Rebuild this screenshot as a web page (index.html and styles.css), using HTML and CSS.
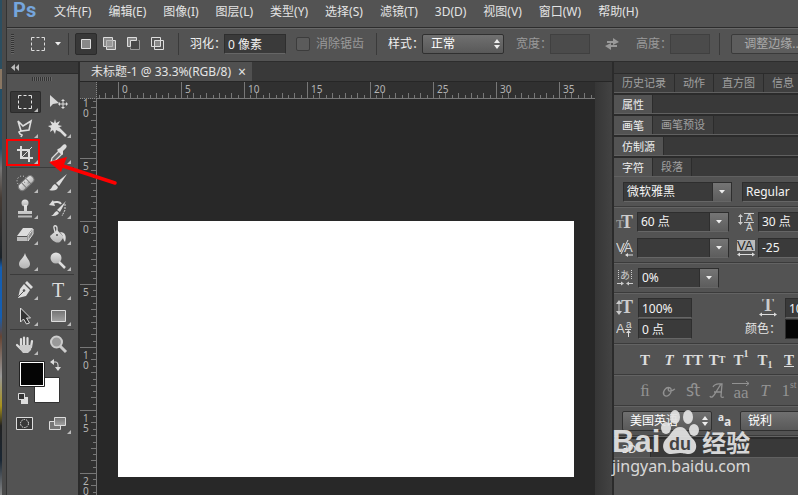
FILE: index.html
```html
<!DOCTYPE html>
<html lang="zh-CN">
<head>
<meta charset="utf-8">
<title>未标题-1 @ 33.3%(RGB/8)</title>
<link rel="stylesheet" href="styles.css">
</head>
<body>
<svg class="defs" aria-hidden="true">
  <defs>
    <linearGradient id="metal" x1="0" y1="0" x2="0" y2="1"><stop offset="0" stop-color="#e6e6e6"/><stop offset="1" stop-color="#b4b4b4"/></linearGradient>
    <linearGradient id="steel" x1="0" y1="0" x2="0" y2="1"><stop offset="0" stop-color="#737373"/><stop offset="1" stop-color="#a2a2a2"/></linearGradient>
    <symbol id="ticks-h" viewBox="0 0 63 16"><path d="M.5 0v16M12.5 11v5M25.5 11v5M38.5 11v5M50.5 11v5M6.5 13v3M19.5 13v3M32.5 13v3M44.5 13v3M57.5 13v3" stroke="#777" fill="none"/></symbol>
    <symbol id="ticks-v" viewBox="0 0 16 63"><path d="M0 .5h16M11 12.500h5M11 25.500h5M11 38.500h5M11 50.500h5M13 6.500h3M13 19.500h3M13 32.500h3M13 44.500h3M13 57.500h3" stroke="#777" fill="none"/></symbol>
    <symbol id="down" viewBox="0 0 6 4"><path d="M0 0h6L3 3.500z" fill="#eee"/></symbol>
    <symbol id="updown" viewBox="0 0 6 10"><path d="M0 4h6L3 0zM0 6h6L3 10z" fill="#eee"/></symbol>
    <symbol id="marquee" viewBox="0 0 16 16"><path d="M1.500 4.500v-3h3M6.500 1.500h3M11.500 1.500h3v3M14.500 6.500v3M14.500 11.500v3h-3M9.500 14.500h-3M4.500 14.500h-3v-3M1.500 9.500v-3" fill="none" stroke="#ddd"/></symbol>
  </defs>
</svg>
<div class="screen">
  <div class="desktop-edge"></div>
  <div class="app">
    <nav class="menubar" aria-label="菜单">
      <span class="logo">Ps</span>
      <button>文件(F)</button><button>编辑(E)</button><button>图像(I)</button><button>图层(L)</button><button>类型(Y)</button><button>选择(S)</button><button>滤镜(T)</button><button>3D(D)</button><button>视图(V)</button><button>窗口(W)</button><button>帮助(H)</button>
    </nav>

    <div class="options">
      <span class="grip-v"></span>
      <button class="preset" aria-label="选框工具"><svg width="16" height="16"><use href="#marquee"/></svg><svg width="6" height="4"><use href="#down"/></svg></button>
      <div class="modes">
        <button class="mode on" aria-label="新选区"><svg width="16" height="16"><path d="M3.500 3.500h9v9h-9z" fill="#888" stroke="#ddd"/></svg></button>
        <button class="mode" aria-label="添加到选区"><svg width="16" height="16"><path d="M1.500 1.500h9v3h3v9h-9v-3h-3z" fill="#888" stroke="#ddd"/><path d="M4.500 10.500v-6h6v6z" fill="#999" stroke="#bbb"/></svg></button>
        <button class="mode" aria-label="从选区减去"><svg width="16" height="16"><path d="M1.500 1.500h9v3h-6v6h-3z" fill="#888" stroke="#ddd"/><path d="M12.500 4.500h1v9h-9v-2" fill="none" stroke="#999"/><path d="M5 5h8v8H5z" fill="#484848"/></svg></button>
        <button class="mode" aria-label="与选区交叉"><svg width="16" height="16"><path d="M1.500 1.500h9v9h-9zM4.500 4.500h9v9h-9z" fill="none" stroke="#ddd"/><path d="M5 5h5v5H5z" fill="#888"/></svg></button>
      </div>
      <label class="opt">羽化：<input class="field feather" value="0 像素"></label>
      <label class="opt check dim"><input type="checkbox" disabled>消除锯齿</label>
      <div class="sized">
        <label class="opt">样式：<span class="pick style-pick"><select><option>正常</option></select><svg width="6" height="10"><use href="#updown"/></svg></span></label>
        <label class="opt dim">宽度：<input class="field size" disabled></label>
        <button class="swap" aria-label="交换宽高"><svg width="16" height="14"><path d="M3 4h6V1l6 4-6 3V6H3zM13 10H7v3L1 9l6-3v2h6z" fill="#999"/></svg></button>
        <label class="opt dim">高度：<input class="field size" disabled></label>
      </div>
      <button class="refine">调整边缘...</button>
    </div>

    <div class="workspace">
      <aside class="tools" aria-label="工具">
        <button class="collapse" aria-label="折叠"><svg width="9" height="7"><path d="M4 0v7L0 3.500zM8 0v7L4.500 3.500z" fill="#bbb"/></svg></button>
        <span class="grip-h"></span>
        <div class="toolset">
          <button class="tool on more" aria-label="矩形选框"><svg width="22" height="22" viewBox="0 0 22 22"><path d="M4.500 7.500v-3h3M9.500 4.500h3M14.500 4.500h3v3M17.500 9.500v3M17.500 14.500v3h-3M12.500 17.500h-3M7.500 17.500h-3v-3M4.500 12.500v-3" fill="none" stroke="#e5e5e5"/></svg></button>
          <button class="tool" aria-label="移动"><svg width="22" height="22" viewBox="0 0 22 22"><path d="M3 4v12l3-3 6-1z" fill="#d8d8d8"/><path d="M16 8l-2 2h4zM16 18l-2-2h4zM11 13l2-2v4zM21 13l-2-2v4z" fill="#ddd"/><path d="M16 9v8M12 13h8" stroke="#ddd"/></svg></button>
          <button class="tool more" aria-label="多边形套索"><svg width="22" height="22" viewBox="0 0 22 22"><path d="M4 4l5 5 8-5-2 9-8 1zM7 14l-2 1 1 2 2 1-1 2" fill="none" stroke="#ddd" stroke-width="1.600"/></svg></button>
          <button class="tool more" aria-label="魔棒"><svg width="22" height="22" viewBox="0 0 22 22"><path d="M8 2l1 4 4-2-2 4 4 1-4 2 2 4-4-2-1 4-2-4-3 2 1-4-3-2 4-1-2-4 4 2z" fill="#ddd"/><path d="M11 11l8 8" stroke="#ddd" stroke-width="2.500"/></svg></button>
          <button class="tool more" aria-label="裁剪"><svg width="22" height="22" viewBox="0 0 22 22"><path d="M7 3v12h12M3 7h12v12" fill="none" stroke="#ddd" stroke-width="2"/><path d="M8 14L18 4" stroke="#ddd"/></svg></button>
          <button class="tool more" aria-label="吸管"><svg width="22" height="22" viewBox="0 0 22 22"><path d="M4 19l1-4 7-7 3 3-7 7z" fill="#696969" stroke="#ddd" stroke-width="1.300"/><path d="M11 6l2-1 3-3c2-2 5 1 3 3l-3 3v3l-1 1-5-5z" fill="#ddd"/></svg></button>
        </div>
        <div class="toolset">
          <button class="tool more" aria-label="污点修复"><svg width="22" height="22" viewBox="0 0 22 22"><circle cx="8" cy="9" r="5" fill="none" stroke="#ddd" stroke-dasharray="1 2"/><g transform="rotate(-43 12 11)"><rect x="3" y="7.500" width="18" height="7.500" rx="3.500" fill="url(#metal)" stroke="#777"/><path d="M9 8v7M15 8v7M11 9.500h1M13 12.500h1" stroke="#777"/></g></svg></button>
          <button class="tool more" aria-label="画笔"><svg width="22" height="22" viewBox="0 0 22 22"><path d="M20 2l-8 12-3-3z" fill="#ddd"/><path d="M8 12l3 3c-1 4-5 4-9 3 3-1 3-5 6-6z" fill="#ddd"/></svg></button>
          <button class="tool more" aria-label="仿制图章"><svg width="22" height="22" viewBox="0 0 22 22"><circle cx="11" cy="5" r="3.500" fill="url(#metal)"/><path d="M10 7h3v6h5v3H4v-3h6zM4 17.500h14v2H4z" fill="url(#metal)"/></svg></button>
          <button class="tool more" aria-label="历史记录画笔"><svg width="22" height="22" viewBox="0 0 22 22"><path d="M19 3l-6 11-3-2zM10 13l2 2c-2 3-5 3-8 3 3-1 3-4 6-5z" fill="#ddd"/><path d="M5 5c4-2 8-1 9 1" fill="none" stroke="#ddd" stroke-width="2"/><path d="M2 7l4-5 2 6z" fill="#ddd"/><path d="M18 6v6l-3 6" fill="none" stroke="#ddd" stroke-dasharray="2 1"/></svg></button>
          <button class="tool more" aria-label="橡皮擦"><svg width="22" height="22" viewBox="0 0 22 22"><path d="M9 4h10l-6 8H3z" fill="#ddd"/><path d="M3 13h10v4H3z" fill="#bbb"/><path d="M14 12l5-7v5l-5 7z" fill="#8c8c8c" stroke="#ddd"/></svg></button>
          <button class="tool more" aria-label="油漆桶"><svg width="22" height="22" viewBox="0 0 22 22"><path d="M3 12l7-6 7 7-4 5c-4 2-9-2-10-6z" fill="url(#metal)"/><path d="M10 11V4c0-3-4-3-3 0l1 4" fill="none" stroke="#ddd" stroke-width="1.300"/><path d="M13 8c5 0 7 4 5 10-2-2-2-5-2-6z" fill="#ddd"/><circle cx="10" cy="11" r="1" fill="#555"/></svg></button>
          <button class="tool more" aria-label="模糊"><svg width="22" height="22" viewBox="0 0 22 22"><path d="M11 3c1 5 5 7 5 11 0 6-11 6-11 0 0-4 5-6 6-11z" fill="url(#metal)"/></svg></button>
          <button class="tool more" aria-label="减淡"><svg width="22" height="22" viewBox="0 0 22 22"><circle cx="9" cy="8" r="5.500" fill="url(#metal)"/><path d="M12 12l6 6" stroke="#ddd" stroke-width="2.500"/></svg></button>
        </div>
        <div class="toolset">
          <button class="tool more" aria-label="钢笔"><svg width="22" height="22" viewBox="0 0 22 22"><path d="M13 2l6 6-2 2-6-6zM10 5l6 6-4 6-8 2 2-9z" fill="#ddd"/><path d="M4 18l6-6" stroke="#555"/><circle cx="10" cy="11.500" r="1.300" fill="#555"/></svg></button>
          <button class="tool more type" aria-label="横排文字">T</button>
          <button class="tool more" aria-label="路径选择"><svg width="22" height="22" viewBox="0 0 22 22"><path d="M6.500 3v14l3-3 3 5 3-1-3-5h4z" fill="#333" stroke="#ddd"/></svg></button>
          <button class="tool more" aria-label="矩形"><svg width="22" height="22" viewBox="0 0 22 22"><path d="M4.500 5.500h14v11h-14z" fill="url(#steel)" stroke="#ddd"/></svg></button>
        </div>
        <div class="toolset">
          <button class="tool more" aria-label="抓手"><svg width="22" height="22" viewBox="0 0 22 22"><path d="M7 13V5M10 12V3.500M13.500 12V4M17 13l1-6M7 15l-4-4" stroke="#ddd" stroke-width="2.200" stroke-linecap="round"/><path d="M6 11h12l-1 5-3 3H9l-4-5z" fill="#ccc"/></svg></button>
          <button class="tool" aria-label="缩放"><svg width="22" height="22" viewBox="0 0 22 22"><path d="M13 12l6 6" stroke="#ccc" stroke-width="3"/><circle cx="9.500" cy="8" r="5.500" fill="#999" stroke="#ccc" stroke-width="2"/></svg></button>
        </div>
        <button class="colors" aria-label="前景色和背景色"><svg width="50" height="48" viewBox="0 0 50 48">
          <path d="M17.500 18.500h25v25h-25z" fill="#fff" stroke="#333"/><path d="M2.500 2.500h25v25h-25z" fill="#fff" stroke="#222"/><path d="M4 4h22v22H4z" fill="#050505"/>
          <path d="M36 3h3q2 0 2 3v3" fill="none" stroke="#ddd"/><path d="M33 3l4-3v6zM38 8h6l-3 4z" fill="#ddd"/>
          <path d="M4 38h7v7H4z" fill="#ddd"/><path d="M1.500 34.500h6v6h-6z" fill="#333" stroke="#ddd"/></svg></button>
        <div class="toolset modeset">
          <button class="tool" aria-label="快速蒙版"><svg width="22" height="22" viewBox="0 0 22 22"><path d="M2.500 4.500h16v12h-16z" fill="#383838" stroke="#ddd"/><circle cx="10.500" cy="10.500" r="4" fill="none" stroke="#eee" stroke-dasharray="1.500 1"/></svg></button>
          <button class="tool more" aria-label="屏幕模式"><svg width="22" height="22" viewBox="0 0 22 22"><path d="M2.500 8.500h11v8h-11z" fill="#777" stroke="#ddd"/><path d="M7.500 4.500h11v8h-11z" fill="url(#steel)" stroke="#ddd"/></svg></button>
        </div>
      </aside>

      <main class="doc">
        <div class="doc-tabs"><div class="doc-tab">未标题-1 @ 33.3%(RGB/8)<button class="close" aria-label="关闭">×</button></div></div>
        <div class="view">
          <div class="stage">
            <div class="corner"></div>
            <div class="ruler-h">
              <div class="lead"><svg width="63" height="16"><use href="#ticks-h"/></svg></div>
              <div class="cell"><svg width="63" height="16"><use href="#ticks-h"/></svg><span>0</span></div>
              <div class="cell"><svg width="63" height="16"><use href="#ticks-h"/></svg><span>5</span></div>
              <div class="cell"><svg width="63" height="16"><use href="#ticks-h"/></svg><span>10</span></div>
              <div class="cell"><svg width="63" height="16"><use href="#ticks-h"/></svg><span>15</span></div>
              <div class="cell"><svg width="63" height="16"><use href="#ticks-h"/></svg><span>20</span></div>
              <div class="cell"><svg width="63" height="16"><use href="#ticks-h"/></svg><span>25</span></div>
              <div class="cell"><svg width="63" height="16"><use href="#ticks-h"/></svg><span>30</span></div>
              <div class="cell"><svg width="63" height="16"><use href="#ticks-h"/></svg><span>35</span></div>
            </div>
            <div class="ruler-v">
              <div class="cell first"><svg width="16" height="63"><use href="#ticks-v"/></svg><span>1<br>0</span></div>
              <div class="cell"><svg width="16" height="63"><use href="#ticks-v"/></svg><span>5</span></div>
              <div class="cell"><svg width="16" height="63"><use href="#ticks-v"/></svg><span>0</span></div>
              <div class="cell"><svg width="16" height="63"><use href="#ticks-v"/></svg><span>5</span></div>
              <div class="cell"><svg width="16" height="63"><use href="#ticks-v"/></svg><span>1<br>0</span></div>
              <div class="cell"><svg width="16" height="63"><use href="#ticks-v"/></svg><span>1<br>5</span></div>
              <div class="cell"><svg width="16" height="63"><use href="#ticks-v"/></svg><span>2<br>0</span></div>
            </div>
            <div class="pasteboard"><div class="artboard"></div></div>
          </div>
          <div class="scrollbar"></div>
        </div>
      </main>

      <aside class="panels">
        <div class="dock-head"></div>
        <div class="tabs"><button>历史记录</button><button>动作</button><button>直方图</button><button>信息</button></div>
        <div class="tabs"><button class="on">属性</button></div>
        <div class="tabs"><button class="on">画笔</button><button>画笔预设</button></div>
        <div class="tabs"><button class="on">仿制源</button></div>
        <div class="tabs open"><button class="on">字符</button><button>段落</button></div>
        <section class="char">
          <div class="row fonts">
            <span class="combo w108"><input value="微软雅黑" aria-label="字体"><button aria-label="选择字体"><svg width="6" height="4"><use href="#down"/></svg></button></span>
            <span class="combo w108"><input value="Regular" aria-label="字形"></span>
          </div>
          <div class="row metrics">
            <svg width="18" height="18"><text x="0" y="15" class="g-serif s12 mute">T</text><text x="5" y="15" class="g-serif s18">T</text></svg>
            <span class="combo"><input value="60 点" aria-label="字号"><button aria-label="选择字号"><svg width="6" height="4"><use href="#down"/></svg></button></span>
            <svg width="18" height="18"><path d="M3.500 3v8M7 .5h10M7 9.500h10" stroke="#ccc"/><path d="M1 4l2.500-3L6 4zM1 9h5l-2.500 3z" fill="#ccc"/><text x="9" y="8" class="g-sans s10">A</text><text x="9" y="18" class="g-sans s10">A</text></svg>
            <span class="combo"><input value="30 点" aria-label="行距"></span>
            <svg width="18" height="18"><text x="0" y="13" class="g-sans s14">V</text><text x="8" y="13" class="g-sans s14">A</text><path d="M5 15L12 1M10 16h7" stroke="#ddd"/><path d="M9 16l3-2v4z" fill="#ddd"/></svg>
            <span class="combo"><input aria-label="字距微调"><button aria-label="选择字距微调"><svg width="6" height="4"><use href="#down"/></svg></button></span>
            <svg width="18" height="18"><path d="M0 1h18v11H0z" fill="#bbb"/><text x="0" y="11" class="g-sans s14 ink">VA</text><path d="M2 15.500h14" stroke="#ddd"/><path d="M0 15.500l3-2v4zM18 15.500l-3-2v4z" fill="#ddd"/></svg>
            <span class="combo"><input value="-25" aria-label="字距"></span>
          </div>
          <div class="row">
            <svg width="18" height="18"><path d="M2.500 1v10M15.500 1v10" stroke="#ccc" stroke-dasharray="1 1"/><text x="4" y="10" class="g-cjk s10">あ</text><path d="M1 14.500h6M11 14.500h6" stroke="#ccc"/><path d="M8 14.500l-3-2v4zM10 14.500l3-2v4z" fill="#ccc"/></svg>
            <span class="combo w80"><input value="0%" aria-label="比例间距"><button aria-label="选择比例间距"><svg width="6" height="4"><use href="#down"/></svg></button></span>
          </div>
          <div class="row scales">
            <svg width="18" height="18"><path d="M3 4v10" stroke="#ccc"/><path d="M0 5l3-4 3 4zM0 12h6l-3 4z" fill="#ccc"/><text x="5" y="14" class="g-serif s18">T</text></svg>
            <input class="field" value="100%" aria-label="垂直缩放">
            <svg class="end" width="18" height="18"><text x="3" y="12" class="g-serif s18">T</text><path d="M2 15.500h14" stroke="#ddd"/><path d="M0 15.500l3-2v4zM18 15.500l-3-2v4z" fill="#ddd"/></svg>
            <input class="field" value="100%" aria-label="水平缩放">
            <svg width="18" height="18"><text x="0" y="13" class="g-sans s14">A</text><text x="10" y="8" class="g-sans s10">a</text><path d="M9 9.500h6M12.500 12v5" stroke="#ddd"/><path d="M10 13l2.500-3 2.500 3z" fill="#ddd"/></svg>
            <input class="field" value="0 点" aria-label="基线偏移">
            <span class="end">颜色：</span>
            <button class="swatch" aria-label="文本颜色"></button>
          </div>
          <div class="row glyphs">
            <button><b>T</b></button><button><i>T</i></button><button>TT</button><button>T<small>T</small></button><button>T<sup>1</sup></button><button>T<sub>1</sub></button><button><u>T</u></button>
          </div>
          <div class="row glyphs off">
            <button>ﬁ</button><button><svg width="16" height="16"><path d="M9 5C5 3 1 9 3 12c3 3 8-1 7-6-1-3-4 0-2 2 2 1 4-1 6-2" fill="none" stroke="#929292" stroke-width="1.300"/></svg></button><button>ﬆ</button><button><svg width="18" height="18"><path d="M2 14c1 3 4 0 6-4l5-8h1l-1 12q0 2 3 1M6 10h8M5 5q2-4 8-3" fill="none" stroke="#929292" stroke-width="1.300"/></svg></button><button class="over"><svg width="18" height="5"><path d="M0 2.500h17M14 0l3 2.500-3 2.500" fill="none" stroke="#929292"/></svg>aa</button><button><i>T</i></button><button>1<sup>st</sup></button>
          </div>
          <div class="row langs">
            <span class="pick lang"><select aria-label="语言"><option>美国英语</option></select><svg width="6" height="10"><use href="#updown"/></svg></span>
            <span class="aa"><sup>a</sup>a</span>
            <span class="pick lang"><select aria-label="消除锯齿方式"><option>锐利</option></select></span>
          </div>
        </section>
        <div class="tabs last"><button class="on">3D</button></div>
        <div class="empty"></div>
      </aside>
    </div>
  </div>

  <svg class="callout" width="112" height="50" viewBox="0 0 112 50" aria-hidden="true"><path d="M1 1h32v25H1z" fill="none" stroke="#f00" stroke-width="2"/><path d="M57 27l52 17" stroke="#f00" stroke-width="3.500" stroke-linecap="round"/><path d="M43 23l18-5-6 15z" fill="#f00"/></svg>

  <div class="mark">
    <div class="mark-name"><span>Bai</span><svg width="38" height="46" viewBox="0 0 38 46"><g fill="#e4e4e4"><ellipse cx="5" cy="18" rx="5" ry="6"/><ellipse cx="14" cy="7" rx="5" ry="7"/><ellipse cx="27" cy="7" rx="5" ry="7"/><ellipse cx="33" cy="20" rx="5" ry="6"/><path d="M19 17c7 0 8 8 13 12 6 6 3 15-4 15-5 0-6-1-9-1s-5 1-9 1C3 44-1 36 5 29c5-4 7-12 14-12z"/></g><text x="8" y="40" class="du">du</text></svg><b>经验</b></div>
    <div class="mark-url">jingyan.baidu.com</div>
  </div>
</div>
</body>
</html>
```

FILE: styles.css
```css
* { box-sizing: border-box; }
html, body { margin: 0; height: 100%; }
body { background: #535353; color: #e4e4e4; font: 12px/16px "Noto Sans", "Noto Sans CJK SC", sans-serif; overflow: hidden; }
button, input, select { font: inherit; color: inherit; margin: 0; padding: 0; border: 0; background: none; border-radius: 0; min-width: 0; }
svg { display: block; flex: none; }
.defs { position: absolute; width: 0; height: 0; }

.screen { position: relative; display: flex; height: 100vh; overflow: hidden; }
.desktop-edge { flex: 0 0 6px; border-right: 4px solid #4a4a4a; background: linear-gradient(#2c4e60 0 14%, #8a7763 14% 18%, #254e66 18% 30%, #777 34%, #463c35 40%, #1b2228 52%, #145eb2 54% 64%, #643 68%, #999 76%, #a8921b 82%, #222 86%, #1a2734 93%, #888); }
.app { flex: 1; min-width: 0; display: flex; flex-direction: column; border-left: 1px solid #333; }

/* Menu and options bars */
.menubar { flex: 0 0 28px; display: flex; align-items: center; gap: 17px; padding: 0 6px 4px; white-space: nowrap; border-bottom: 1px solid #2d2d2d; overflow: hidden; }
.menubar button { flex: none; }
.logo { flex: none; width: 24px; padding-bottom: 3px; color: #75a5dc; font: bold 20px/24px Roboto, sans-serif; }
.options { flex: 0 0 34px; display: flex; align-items: center; border-top: 1px solid #686868; border-bottom: 1px solid #2d2d2d; padding: 0 0 2px 4px; white-space: nowrap; overflow: hidden; }
.options > * { flex: none; }
.grip-v { width: 3px; height: 20px; background: repeating-linear-gradient(#333 0 1px, #666 1px 2px); }
.preset { display: flex; align-items: center; gap: 9px; margin-left: 16px; }
.modes { display: flex; gap: 2px; margin-left: 7px; padding: 0 9px 0 6px; border-left: 1px solid #3a3a3a; border-right: 1px solid #3a3a3a; }
.mode { width: 22px; height: 22px; padding: 3px; }
.mode.on { background: #383838; border: 1px solid #2b2b2b; padding: 2px; border-radius: 2px; }
.opt { display: flex; align-items: center; color: #f0f0f0; }
.opt .field, .opt .pick { margin-left: -2px; }
.modes + .opt { margin-left: 11px; }
.field { height: 20px; padding: 0 3px; background: #3a3a3a; border: 1px solid #2e2e2e; border-bottom-color: #666; }
.feather { width: 62px; }
.check { margin-left: 10px; gap: 6px; }
.check input { appearance: none; width: 14px; height: 14px; border: 1px solid #3c3c3c; border-radius: 2px; background: #5b5b5b; }
.opt.dim { color: #9a9a9a; }
.sized { display: flex; align-items: center; height: 22px; margin-left: 12px; padding: 0 9px 0 11px; border-left: 1px solid #3a3a3a; border-right: 1px solid #3a3a3a; }
.pick { position: relative; display: flex; }
.pick select { appearance: none; width: 100%; height: 20px; padding: 0 8px; color: #fff; background: linear-gradient(#707070, #595959); border: 1px solid #303030; border-radius: 2px; }
.pick svg { position: absolute; right: 4px; top: 5px; pointer-events: none; }
.style-pick { width: 82px; }
.sized .dim { margin-left: 12px; }
.size { width: 40px; background: #4b4b4b; border-color: #404040; }
.swap { margin-left: 14px; }
.swap + .dim { margin-left: 16px; }
.refine { width: 84px; height: 20px; margin-left: 11px; color: #aaa; background: #5d5d5d; border: 1px solid #3a3a3a; border-radius: 2px; }

/* Tool palette */
.workspace { flex: 1; min-height: 0; display: flex; background: #2b2b2b; }
.tools { flex: 0 0 71px; margin-right: 2px; display: flex; flex-direction: column; background: #535353; overflow: hidden; }
.collapse { flex: 0 0 12px; padding-left: 4px; background: #383838; border-bottom: 1px solid #2b2b2b; }
.grip-h { flex: 0 0 4px; width: 20px; margin: 3px 25px 8px; background: repeating-linear-gradient(90deg, #333 0 1px, #666 1px 2px); }
.toolset { display: grid; grid-template-columns: 31px 31px; gap: 4px 2px; padding: 2px 0; margin: 0 4px 2px 3px; border-bottom: 1px solid #3b3b3b; }
.tool { position: relative; height: 22px; padding: 0 5px 0 4px; }
.tool.on { background: #383838; box-shadow: inset 0 0 0 1px #2b2b2b; border-radius: 2px; }
.tool.more::after { content: ""; position: absolute; right: 3px; bottom: 1px; border-left: 4px solid transparent; border-bottom: 4px solid #bbb; }
.tool.type { color: #ddd; font: 20px/22px "Liberation Serif", serif; }
.toolset:nth-of-type(4) { border: 0; margin-bottom: 0; }
.colors { margin: 1px 0 0 10px; width: 50px; height: 48px; }
.modeset { margin-top: 4px; border: 0; }

/* Document window */
.doc { flex: 1; min-width: 0; display: flex; flex-direction: column; }
.doc-tabs { flex: 0 0 20px; display: flex; background: #393939; border-bottom: 1px solid #262626; }
.doc-tab { display: flex; align-items: center; gap: 7px; padding: 0 6px 0 11px; background: #505050; white-space: nowrap; }
.close { font-size: 14px; line-height: 16px; }
.view { flex: 1; min-height: 0; display: flex; }
.stage { flex: 1; min-width: 0; display: grid; grid-template: 17px 1fr / 17px 1fr; overflow: hidden; }
.corner { background: #454545; border-right: 1px dotted #888; border-bottom: 1px dotted #888; }
.ruler-h, .ruler-v { display: flex; overflow: hidden; background: #303030; color: #b4b4b4; font-size: 10px; line-height: 10px; }
.ruler-h { border-bottom: 1px solid #777; }
.ruler-v { flex-direction: column; border-right: 1px solid #777; }
.cell { position: relative; flex: none; }
.cell span { position: absolute; left: 4px; top: 2px; }
.ruler-v .cell span { left: 3px; top: 3px; }
.lead { flex: 0 0 21px; display: flex; justify-content: flex-end; overflow: hidden; }
.first { margin-top: -4px; }
.pasteboard { min-width: 0; background: #282828; padding: 122px 21px 0; }
.artboard { aspect-ratio: 456 / 256; background: #fff; }
.scrollbar { flex: 0 0 17px; background: linear-gradient(90deg, #363636, #434343); }

/* Panel dock */
.panels { flex: 0 0 184px; margin-left: 2px; display: flex; flex-direction: column; overflow: hidden; }
.dock-head { flex: 0 0 12px; background: #3a3a3a; border-bottom: 1px solid #2b2b2b; }
.tabs { flex: 0 0 19px; display: flex; margin-bottom: 2px; background: #393939; border-bottom: 1px solid #606060; font-size: 11px; line-height: 16px; white-space: nowrap; overflow: hidden; }
.tabs button { flex: none; padding: 0 8px; color: #a0a0a0; border-right: 1px solid #2c2c2c; background: #3f3f3f; }
.tabs .on { color: #eee; background: #535353; margin-bottom: -1px; }
.tabs.open { margin-bottom: 0; }
.char { background: #535353; }
.row { display: flex; align-items: center; min-width: 240px; padding: 5px 0 4px 2px; gap: 4px; border-bottom: 1px solid #3b3b3b; box-shadow: 0 1px #636363; }
.combo { display: flex; height: 20px; background: #3a3a3a; border: 1px solid #2e2e2e; border-bottom-color: #666; }
.combo input { flex: 1; width: 0; padding-left: 3px; color: #f4f4f4; }
.combo button { flex: 0 0 19px; display: grid; place-items: center; background: linear-gradient(#757575, #5d5d5d); border-left: 1px solid #2e2e2e; }
.w108 { width: 109px; }
.w80 { width: 81px; }
.fonts { padding-left: 9px; gap: 10px; }
.metrics { display: grid; grid-template-columns: 18px 92px 23px 92px; gap: 6px 3px; }
.metrics > svg:nth-of-type(2n) { justify-self: end; }
.scales { display: grid; grid-template-columns: 18px 54px 85px 60px; gap: 1px 4px; }
.scales .field { width: 100%; color: #f4f4f4; }
.end { justify-self: end; }
.scales svg.end { margin-right: 4px; }
.swatch { height: 20px; background: #050505; border: 1px solid #2d2d2d; }
.g-serif { font-family: "Liberation Serif", serif; font-weight: bold; fill: #ccc; }
.g-sans { font-family: "Liberation Sans", sans-serif; fill: #d4d4d4; }
.g-cjk { font-family: "Noto Sans CJK SC", sans-serif; fill: #ccc; }
.mute { fill: #999; }
.ink { fill: #222; }
.s10 { font-size: 10px; }
.s12 { font-size: 12px; }
.s14 { font-size: 13px; }
.s18 { font-size: 18px; }
.glyphs { padding-left: 19px; gap: 0; color: #ddd; font: bold 15px/20px "Liberation Serif", serif; }
.glyphs button { flex: 0 0 24px; height: 21px; display: flex; justify-content: center; align-items: center; }
.glyphs small, .glyphs sup, .glyphs sub { font-size: 10px; line-height: 10px; }
.glyphs sup { align-self: flex-start; }
.glyphs sub { align-self: flex-end; }
.glyphs.off { color: #929292; font-weight: normal; font-size: 17px; }
.glyphs .over { flex-direction: column; line-height: 14px; }
.langs { padding-left: 8px; gap: 6px; }
.lang { width: 90px; }
.lang select { padding-left: 7px; }
.aa { width: 16px; white-space: nowrap; font-weight: bold; }
.aa sup { font-size: 10px; line-height: 10px; }
.tabs.last { margin: 3px 0 0; }
.tabs.last .on { padding-right: 14px; }
.empty { flex: 1; background: #535353; }

/* Overlays */
.callout { position: absolute; left: 6px; top: 139px; }
.mark { position: absolute; left: 612px; top: 410px; color: #e4e4e4; opacity: .92; }
.mark-name { display: flex; align-items: flex-end; height: 46px; }
.mark-name span { font: bold 31px/28px "Liberation Sans", sans-serif; }
.mark-name svg { margin-left: 1px; }
.mark-name b { margin-left: 3px; font: bold 24px/28px "Noto Sans CJK SC", sans-serif; }
.mark-url { font: 16px/20px "Noto Sans", sans-serif; }
.du { font: bold 18px "Liberation Sans", sans-serif; fill: #444; }
```
